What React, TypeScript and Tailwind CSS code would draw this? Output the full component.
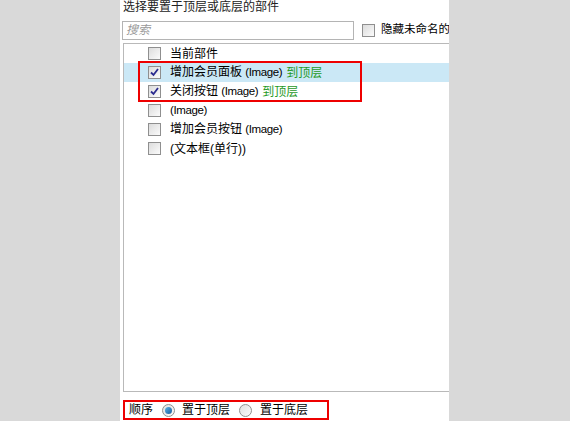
import React from "react";

const font = { fontFamily: '"Liberation Sans", "Noto Sans CJK SC", sans-serif' };

function Box({ checked }: { checked?: boolean }) {
  return (
    <div className="w-[13px] h-[13px] border border-[#8f8f8f] bg-gradient-to-br from-[#dcdcdc] to-[#fbfbfb] flex items-center justify-center shrink-0">
      {checked && (
        <svg width="9" height="9" viewBox="0 0 9 9">
          <path d="M1 4.5 L3.5 7 L8 1" stroke="#2b2b8f" strokeWidth="1.8" fill="none" />
        </svg>
      )}
    </div>
  );
}

function Radio({ checked }: { checked?: boolean }) {
  return (
    <div className="w-[13px] h-[13px] rounded-full border border-[#8f8f8f] bg-gradient-to-br from-[#e0e0e0] to-[#fafafa] flex items-center justify-center shrink-0">
      {checked && <div className="w-[7px] h-[7px] rounded-full bg-gradient-to-br from-[#5ab0e6] to-[#1a5e9e]" />}
    </div>
  );
}

const rows: { name: string; latin?: string; checked: boolean; tag?: string; sel?: boolean }[] = [
  { name: "当前部件", checked: false },
  { name: "增加会员面板 ", latin: "(Image)", checked: true, tag: "到顶层", sel: true },
  { name: "关闭按钮 ", latin: "(Image)", checked: true, tag: "到顶层" },
  { name: "", latin: "(Image)", checked: false },
  { name: "增加会员按钮 ", latin: "(Image)", checked: false },
  { name: "(文本框(单行))", checked: false },
];

export default function App() {
  return (
    <div className="w-[570px] h-[421px] bg-[#d9d9d9] flex justify-center overflow-hidden text-[12px] text-black" style={font}>
      <div className="w-[329px] ml-[-1px] bg-white flex flex-col pl-[3px] overflow-hidden">
        <div className="h-[17px] leading-[15px] text-[12px] text-[#222]">选择要置于顶层或底层的部件</div>
        <div className="flex items-center h-[20px] mt-[3px]">
          <div className="w-[232px] h-[19px] shrink-0 border border-[#b4b4b4] ml-[-1px] flex items-center pl-[3px] text-[#9a9a9a] italic">搜索</div>
          <div className="ml-[8px] mt-[1px] shrink-0"><Box /></div>
          <span className="ml-[6px] whitespace-nowrap text-[11.5px]">隐藏未命名的</span>
        </div>
        <div className="relative mt-[3px] h-[349px] border-t border-l border-b border-[#b9b9b9]">
          {rows.map((r, i) => (
            <div key={i} className={`flex items-center h-[19px] pl-[24px] ${r.sel ? "bg-[#cbe8f6]" : ""}`}>
              <Box checked={r.checked} />
              <span className="ml-[9px] whitespace-pre">
                {r.name}
                {r.latin && <span className="text-[11.5px] tracking-[-0.4px]">{r.latin}</span>}
              </span>
              {r.tag && <span className="ml-[4px] text-[#1f9a1f]">{r.tag}</span>}
            </div>
          ))}
          <div className="absolute left-[14px] top-[17px] w-[224px] h-[41px] border-2 border-[#ee0000]" />
        </div>
        <div className="mt-[8px] w-[206px] h-[20px] border-2 border-[#ee0000] flex items-center pl-[4px]">
          <span>顺序</span>
          <div className="ml-[9px]"><Radio checked /></div>
          <span className="ml-[7px]">置于顶层</span>
          <div className="ml-[9px]"><Radio /></div>
          <span className="ml-[8px]">置于底层</span>
        </div>
      </div>
    </div>
  );
}
